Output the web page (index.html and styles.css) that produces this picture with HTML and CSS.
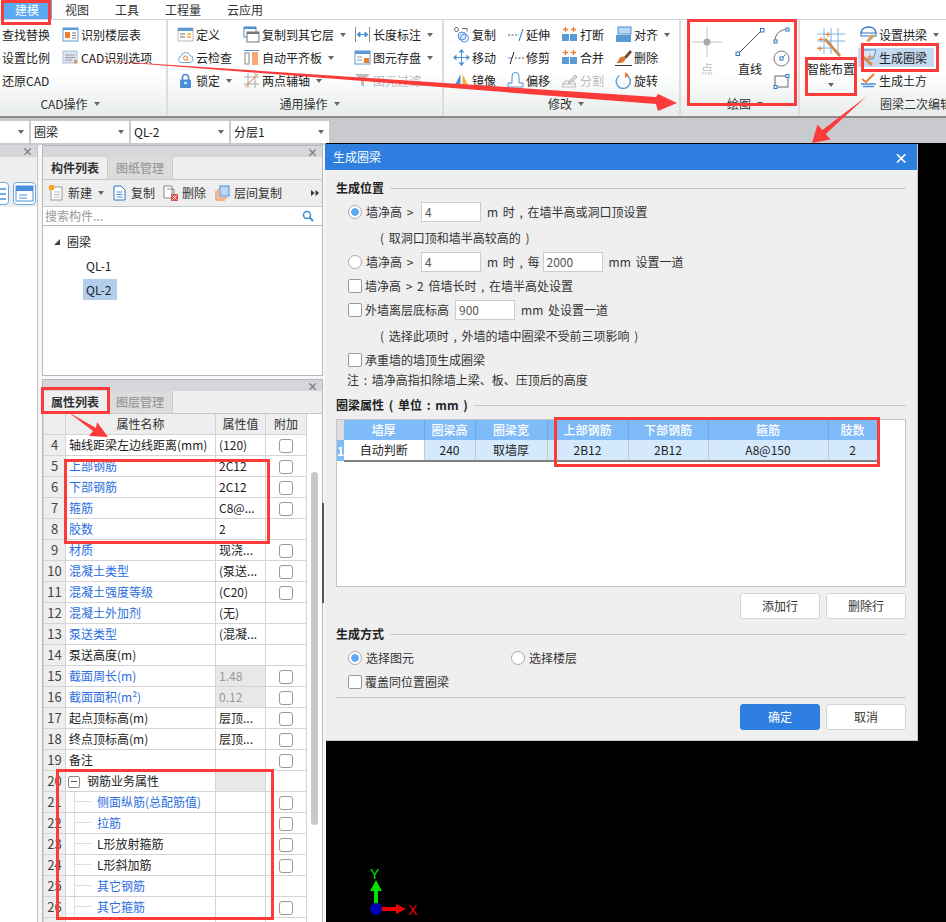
FILE: index.html
```html
<!DOCTYPE html>
<html lang="zh-CN">
  <head>
    <meta charset="UTF-8" />
    <title>生成圈梁</title>
    <link rel="stylesheet" href="styles.css">
  </head>
  <body>
    <div class="page">
      <div class="menu">
        <div class="menu-tab on">建模</div>
        <div class="menu-tab">视图</div>
        <div class="menu-tab">工具</div>
        <div class="menu-tab">工程量</div>
        <div class="menu-tab">云应用</div>
      </div>

      <div class="ribbon">
        <!-- CAD操作 -->
        <div class="group g-cad">
          <div class="group-body">
            <div class="col c1">
              <div class="item">查找替换</div>
              <div class="item">设置比例</div>
              <div class="item">还原CAD</div>
            </div>
            <div class="col">
              <div class="item"><svg class="ic" viewBox="0 0 17 17"><rect x="1" y="2" width="15" height="13" fill="#fff" stroke="#5b9bd5"/><rect x="1" y="2" width="15" height="2" fill="#5b9bd5"/><rect x="3" y="6" width="5" height="6" fill="#ed7d31"/><path d="M10 7h4M10 9.500h4M10 12h4" stroke="#777"/></svg>识别楼层表</div>
              <div class="item"><svg class="ic" viewBox="0 0 17 17"><rect x="1" y="2" width="14" height="12" fill="#dce6f2" stroke="#a9c0da"/><path d="M3 6h10M3 8.500h10M3 11h7" stroke="#9a9a9a"/><path d="M12 10l4 3-2 .5-1 2.500z" fill="#ed7d31"/></svg>CAD识别选项</div>
            </div>
          </div>
          <div class="group-label">CAD操作<i class="caret"></i></div>
        </div>

        <!-- 通用操作 -->
        <div class="group g-common">
          <div class="group-body">
            <div class="col c1">
              <div class="item"><svg class="ic" viewBox="0 0 17 17"><rect x="1" y="2" width="15" height="13" fill="#fff" stroke="#bbb"/><rect x="1" y="2" width="15" height="3" fill="#5b9bd5"/><path d="M3 8h5M3 11h5" stroke="#999" stroke-width="1.500"/><path d="M10 8h4M10 11h4" stroke="#f5a623" stroke-width="1.500"/></svg>定义</div>
              <div class="item"><svg class="ic" viewBox="0 0 17 17"><path d="M4.500 13.500a3.200 3.200 0 0 1-.5-6.300 4.800 4.800 0 0 1 9.200-.6 3.500 3.500 0 0 1 0 6.900z" fill="#fff" stroke="#6aa7e0"/><circle cx="8.500" cy="9" r="2" fill="none" stroke="#ed7d31"/><path d="M10 10.500l1.500 1.500" stroke="#ed7d31"/></svg>云检查</div>
              <div class="item"><svg class="ic" viewBox="0 0 17 17"><path d="M5.500 8V5.500a3 3 0 0 1 6 0V8" fill="none" stroke="#4a90d9" stroke-width="1.600"/><rect x="3" y="7.500" width="11" height="8.500" rx="1" fill="#4a90d9"/><circle cx="8.500" cy="11" r="1.300" fill="#fff"/></svg>锁定<i class="caret"></i></div>
            </div>
            <div class="col c2">
              <div class="item"><svg class="ic" viewBox="0 0 17 17"><rect x="1" y="1" width="12" height="10" fill="#fff" stroke="#4a90d9"/><rect x="1" y="1" width="12" height="2" fill="#4a90d9"/><rect x="4" y="6" width="12" height="10" fill="#fff" stroke="#777"/><rect x="4" y="6" width="12" height="2" fill="#777"/></svg>复制到其它层<i class="caret"></i></div>
              <div class="item"><svg class="ic" viewBox="0 0 17 17"><path d="M1 1.500h15" stroke="#5b9bd5"/><rect x="2" y="4" width="4" height="11" fill="#fff" stroke="#888"/><rect x="9" y="3" width="6" height="13" fill="#f9a876"/></svg>自动平齐板<i class="caret"></i></div>
              <div class="item"><svg class="ic" viewBox="0 0 17 17"><path d="M5 1v15M12 1v15M1 5h15M1 12h15" stroke="#aaa"/><path d="M2 15L15 2" stroke="#ed7d31"/></svg>两点辅轴<i class="caret"></i></div>
            </div>
            <div class="col">
              <div class="item"><svg class="ic" viewBox="0 0 17 17"><path d="M1.500 1v15M15.500 1v15" stroke="#888"/><path d="M3 8.500h11M3 8.500l3-2.500v5zM14 8.500l-3-2.500v5z" fill="#4a90d9" stroke="#4a90d9"/></svg>长度标注<i class="caret"></i></div>
              <div class="item"><svg class="ic" viewBox="0 0 17 17"><rect x="1" y="2" width="15" height="13" fill="#fff" stroke="#5b9bd5"/><rect x="1" y="2" width="15" height="3" fill="#5b9bd5"/><path d="M3 8h5M3 11h5" stroke="#999"/><rect x="10" y="9" width="5" height="5" fill="#ed7d31"/></svg>图元存盘<i class="caret"></i></div>
              <div class="item off"><svg class="ic" viewBox="0 0 17 17"><path d="M1 2h15l-6 6v7l-3-2V8z" fill="#bdbdbd"/></svg>图元过滤</div>
            </div>
          </div>
          <div class="group-label">通用操作<i class="caret"></i></div>
        </div>

        <!-- 修改 -->
        <div class="group g-edit">
          <div class="group-body">
            <div class="col">
              <div class="item"><svg class="ic" viewBox="0 0 17 17"><circle cx="3.500" cy="3.500" r="2" fill="none" stroke="#666"/><circle cx="9" cy="10" r="4" fill="#dbe9f7" stroke="#4a90d9"/><circle cx="11.500" cy="12" r="4" fill="none" stroke="#4a90d9"/><path d="M9 2.500h5v3" fill="none" stroke="#666"/></svg>复制</div>
              <div class="item"><svg class="ic" viewBox="0 0 17 17"><path d="M8.500 3v11M3 8.500h11" stroke="#4a90d9"/><path d="M8.500 0l3 3.500h-6zM8.500 17l3-3.500h-6zM0 8.500l3.500-3v6zM17 8.500l-3.500-3v6z" fill="#4a90d9"/></svg>移动</div>
              <div class="item"><svg class="ic" viewBox="0 0 17 17"><path d="M1 15L7.500 2v13z" fill="#4a90d9"/><path d="M9.500 2L16 15H9.500z" fill="#f5b335"/></svg>镜像</div>
            </div>
            <div class="col">
              <div class="item"><svg class="ic" viewBox="0 0 17 17"><path d="M1 9h11" stroke="#555" stroke-dasharray="2 1.500"/><path d="M12 15l4-12" stroke="#4a90d9" stroke-width="1.200"/></svg>延伸</div>
              <div class="item"><svg class="ic" viewBox="0 0 17 17"><path d="M1 9h4" stroke="#4a90d9"/><path d="M3 15L7 3" stroke="#222"/><path d="M8 9h9" stroke="#555" stroke-dasharray="2 1.500"/></svg>修剪</div>
              <div class="item"><svg class="ic" viewBox="0 0 17 17"><path d="M1 15v-4h4V4a3.500 3.500 0 0 1 7 0v7h4v4z" fill="#fff" stroke="#4a90d9"/><path d="M1 16.500h15" stroke="#f5b335" stroke-width="1.500"/></svg>偏移</div>
            </div>
            <div class="col">
              <div class="item"><svg class="ic" viewBox="0 0 17 17"><rect x="1" y="8" width="7" height="7" fill="#5b9bd5"/><rect x="9" y="8" width="7" height="7" fill="#5b9bd5"/><path d="M4.500 1v5M2 3.500h5M12.500 1v5M10 3.500h5" stroke="#ed7d31" stroke-width="1.400"/></svg>打断</div>
              <div class="item"><svg class="ic" viewBox="0 0 17 17"><rect x="1" y="8" width="15" height="7" fill="#5b9bd5"/><path d="M8.500 8v7" stroke="#fff"/><path d="M4.500 1v5M2 3.500h5M12.500 1v5M10 3.500h5" stroke="#ed7d31" stroke-width="1.400"/></svg>合并</div>
              <div class="item off"><svg class="ic" viewBox="0 0 17 17"><path d="M1 15h14l-2-6H4zM1 12h14" fill="none" stroke="#bbb"/><path d="M7 11l7-8 2 2-7 6z" fill="#e3e3e3" stroke="#aaa"/></svg>分割</div>
            </div>
            <div class="col">
              <div class="item"><svg class="ic" viewBox="0 0 17 17"><rect x="3" y="1" width="13" height="7" fill="#bcd7f2" stroke="#4a90d9"/><rect x="1" y="9" width="15" height="7" fill="#5b9bd5"/></svg>对齐<i class="caret"></i></div>
              <div class="item"><svg class="ic" viewBox="0 0 17 17"><path d="M9 8l6-7 2 2-6 7z" fill="#6b4a2f"/><path d="M4 10c2-3 5-3 6-1 1 2-1 5-5 5H1c2-1 2-2 3-4z" fill="#d9793a"/><path d="M0 16.500h17" stroke="#333"/></svg>删除</div>
              <div class="item"><svg class="ic" viewBox="0 0 17 17"><path d="M4.500 3.500a7 7 0 1 0 6 -.7" fill="none" stroke="#5b9bd5" stroke-width="1.400"/><path d="M10 0l4 3-4 3z" fill="#ed7d31"/></svg>旋转</div>
            </div>
          </div>
          <div class="group-label">修改<i class="caret"></i></div>
        </div>

        <!-- 绘图 -->
        <div class="group g-draw">
          <div class="group-body">
            <div class="big big-point">
              <svg class="ic-big" viewBox="0 0 30 30"><path d="M15 0v30M0 15h30" stroke="#c4c4c4"/><circle cx="15" cy="15" r="3.500" fill="#aaa"/></svg>
              <span class="off">点</span>
            </div>
            <div class="big big-line">
              <svg class="ic-big" viewBox="0 0 30 30"><path d="M3 27L27 3" stroke="#555"/><rect x="1" y="25" width="3.500" height="3.500" fill="#fff" stroke="#2f75c0"/><rect x="25.500" y="1.500" width="3.500" height="3.500" fill="#fff" stroke="#2f75c0"/></svg>
              <span>直线</span>
            </div>
            <div class="col col-shapes">
              <svg class="ic" viewBox="0 0 17 17"><path d="M2 14C2 7 7 3 14 2" fill="none" stroke="#666"/><rect x="1" y="13" width="3" height="3" fill="#fff" stroke="#2f75c0"/><rect x="13" y="1" width="3" height="3" fill="#fff" stroke="#2f75c0"/></svg>
              <svg class="ic" viewBox="0 0 17 17"><circle cx="8.500" cy="8.500" r="7.500" fill="none" stroke="#777"/><rect x="7" y="7" width="3" height="3" fill="#fff" stroke="#2f75c0"/><path d="M10 7l3-3" stroke="#777"/></svg>
              <svg class="ic" viewBox="0 0 17 17"><rect x="2" y="3" width="13" height="11" fill="none" stroke="#666"/><rect x="1" y="12.500" width="3" height="3" fill="#fff" stroke="#2f75c0"/><rect x="13" y="1.500" width="3" height="3" fill="#fff" stroke="#2f75c0"/></svg>
            </div>
          </div>
          <div class="group-label">绘图<i class="caret"></i></div>
        </div>

        <!-- 圈梁二次编辑 -->
        <div class="group g-beam">
          <div class="group-body">
            <div class="big big-smart">
              <svg class="ic-big" viewBox="0 0 30 30"><path d="M8 1v26M15 1v26M22 1v26M1 7h28M1 14h28M1 21h14" stroke="#7fb2e5"/><path d="M8 13l2-2 15 17-2 2z" fill="#c98a4b"/><path d="M5 10v5M2.500 12.500h5M12 5v5M9.500 7.500h5M4 19v5M1.500 21.500h5" stroke="#ed7d31"/></svg>
              <span>智能布置</span>
              <i class="caret"></i>
            </div>
            <div class="col">
              <div class="item"><svg class="ic" viewBox="0 0 17 17"><path d="M1 7c0-8 15-8 15 0" fill="none" stroke="#2f75c0" stroke-width="1.500"/><rect x="1" y="7" width="15" height="3" fill="#fff" stroke="#2f75c0"/><path d="M6 15l6-7 3 2-6 6z" fill="#d9a066"/></svg>设置拱梁<i class="caret"></i></div>
              <div class="item item-sel"><svg class="ic" viewBox="0 0 17 17"><path d="M4 1h12l-3 9H1z" fill="#dce6f2" stroke="#4a90d9"/><path d="M3 6l10 9-2 2L1 8z" fill="#d98a3a"/><path d="M10 5v6M7 8h6" stroke="#ed7d31"/></svg>生成圈梁</div>
              <div class="item"><svg class="ic" viewBox="0 0 17 17"><path d="M2 7l4 3 8-8" fill="none" stroke="#ed7d31" stroke-width="2"/><path d="M1 12h15M3 14.500h11" stroke="#4a90d9" stroke-width="1.300"/></svg>生成土方</div>
            </div>
          </div>
          <div class="group-label">圈梁二次编辑</div>
        </div>
      </div>

      <div class="selects">
        <div class="sel sel-first"><i class="caret"></i></div>
        <div class="sel">圈梁<i class="caret"></i></div>
        <div class="sel">QL-2<i class="caret"></i></div>
        <div class="sel">分层1<i class="caret"></i></div>
      </div>

      <div class="main">
        <div class="side">
          <div class="panel-nav">
            <div class="panel-head"><span>×</span></div>
            <div class="nav-tools">
              <div class="nav-btn"><svg viewBox="0 0 23 23" width="23" height="23"><path d="M3 7h17M3 12h17M3 17h17" stroke="#4a90d9" stroke-width="1.500"/></svg></div>
              <div class="nav-btn"><svg viewBox="0 0 23 23" width="23" height="23"><rect x="3" y="4" width="17" height="15" fill="#fff" stroke="#4a90d9"/><rect x="3" y="4" width="17" height="5" fill="#4a90d9"/><path d="M6 13h8M6 16h8" stroke="#4a90d9"/></svg></div>
            </div>
          </div>

          <div class="stack">
            <div class="panel panel-list">
              <div class="panel-head"><span>×</span></div>
              <div class="panel-tabs">
                <div class="ptab on">构件列表</div>
                <div class="ptab">图纸管理</div>
              </div>
              <div class="panel-tools">
                <div class="tool tool-new"><svg class="ic-sm" viewBox="0 0 15 16"><rect x="2" y="2" width="11" height="13" fill="#fff" stroke="#999"/><path d="M5 7h6M5 9.500h6M5 12h6" stroke="#bbb"/><rect x="0" y="0" width="5" height="5" fill="#f5a623"/></svg>新建<i class="caret"></i></div>
                <div class="tool tool-copy"><svg class="ic-sm" viewBox="0 0 15 16"><path d="M2 1h7l4 4v10H2z" fill="#fff" stroke="#2f75c0"/><path d="M4.500 7h6M4.500 9.500h6M4.500 12h6" stroke="#4a90d9"/></svg>复制</div>
                <div class="tool tool-del"><svg class="ic-sm" viewBox="0 0 15 16"><path d="M1 1h8v12H1z" fill="#fff" stroke="#888"/><path d="M4 4h7v8" fill="none" stroke="#888"/><rect x="8" y="9" width="7" height="7" fill="#d9534f"/><path d="M9.500 10.500l4 4M13.500 10.500l-4 4" stroke="#fff"/></svg>删除</div>
                <div class="tool tool-floor"><svg class="ic-sm" viewBox="0 0 15 16"><path d="M1 6v9h9M3 4v9h9" fill="none" stroke="#ed7d31"/><rect x="5" y="1" width="9" height="10" fill="#bcd7f2" stroke="#4a90d9"/></svg>层间复制</div>
                <svg class="tool-more" viewBox="0 0 8 6" width="8" height="6"><path d="M0 0l3.500 3L0 6zM4.500 0L8 3 4.500 6z" fill="#333"/></svg>
              </div>
              <div class="search"><span>搜索构件...</span><svg viewBox="0 0 12 12" width="12" height="12"><circle cx="5" cy="5" r="3.500" fill="none" stroke="#3a8fd0" stroke-width="1.500"/><path d="M7.500 7.500L11 11" stroke="#3a8fd0" stroke-width="2"/></svg></div>
              <div class="tree">
                <div class="tree-root"><i class="tri"></i>圈梁</div>
                <div class="tree-leaf"><span>QL-1</span></div>
                <div class="tree-leaf"><span class="on">QL-2</span></div>
              </div>
            </div>

            <div class="panel panel-prop">
              <div class="panel-head"><span>×</span></div>
              <div class="panel-tabs">
                <div class="ptab on">属性列表</div>
                <div class="ptab">图层管理</div>
              </div>
              <div class="prop-wrap">
                <table class="prop">
                  <colgroup><col class="pc-n"><col class="pc-name"><col class="pc-val"><col class="pc-add"></colgroup>
                  <thead><tr><th></th><th>属性名称</th><th>属性值</th><th>附加</th></tr></thead>
                  <tbody>
                    <tr><td class="n">4</td><td>轴线距梁左边线距离(mm)</td><td>(120)</td><td class="c"><i class="chk"></i></td></tr>
                    <tr><td class="n">5</td><td class="lnk">上部钢筋</td><td>2C12</td><td class="c"><i class="chk"></i></td></tr>
                    <tr><td class="n">6</td><td class="lnk">下部钢筋</td><td>2C12</td><td class="c"><i class="chk"></i></td></tr>
                    <tr><td class="n">7</td><td class="lnk">箍筋</td><td>C8@...</td><td class="c"><i class="chk"></i></td></tr>
                    <tr><td class="n">8</td><td class="lnk">胶数</td><td>2</td><td class="c"></td></tr>
                    <tr><td class="n">9</td><td class="lnk">材质</td><td>现浇...</td><td class="c"><i class="chk"></i></td></tr>
                    <tr><td class="n">10</td><td class="lnk">混凝土类型</td><td>(泵送...</td><td class="c"><i class="chk"></i></td></tr>
                    <tr><td class="n">11</td><td class="lnk">混凝土强度等级</td><td>(C20)</td><td class="c"><i class="chk"></i></td></tr>
                    <tr><td class="n">12</td><td class="lnk">混凝土外加剂</td><td>(无)</td><td class="c"></td></tr>
                    <tr><td class="n">13</td><td class="lnk">泵送类型</td><td>(混凝...</td><td class="c"></td></tr>
                    <tr><td class="n">14</td><td>泵送高度(m)</td><td></td><td class="c"></td></tr>
                    <tr><td class="n">15</td><td class="lnk">截面周长(m)</td><td class="ro">1.48</td><td class="c"><i class="chk"></i></td></tr>
                    <tr><td class="n">16</td><td class="lnk">截面面积(m²)</td><td class="ro">0.12</td><td class="c"><i class="chk"></i></td></tr>
                    <tr><td class="n">17</td><td>起点顶标高(m)</td><td>层顶...</td><td class="c"><i class="chk"></i></td></tr>
                    <tr><td class="n">18</td><td>终点顶标高(m)</td><td>层顶...</td><td class="c"><i class="chk"></i></td></tr>
                    <tr><td class="n">19</td><td>备注</td><td></td><td class="c"><i class="chk"></i></td></tr>
                    <tr><td class="n">20</td><td class="grp"><i class="minus"></i>钢筋业务属性</td><td class="ro"></td><td class="c"></td></tr>
                    <tr><td class="n">21</td><td class="sub lnk">侧面纵筋(总配筋值)</td><td></td><td class="c"><i class="chk"></i></td></tr>
                    <tr><td class="n">22</td><td class="sub lnk">拉筋</td><td></td><td class="c"><i class="chk"></i></td></tr>
                    <tr><td class="n">23</td><td class="sub">L形放射箍筋</td><td></td><td class="c"><i class="chk"></i></td></tr>
                    <tr><td class="n">24</td><td class="sub">L形斜加筋</td><td></td><td class="c"><i class="chk"></i></td></tr>
                    <tr><td class="n">25</td><td class="sub lnk">其它钢筋</td><td></td><td class="c"></td></tr>
                    <tr><td class="n">26</td><td class="sub lnk">其它箍筋</td><td></td><td class="c"><i class="chk"></i></td></tr>
                    <tr><td class="n"></td><td></td><td></td><td class="c"><i class="chk"></i></td></tr>
                  </tbody>
                </table>
                <div class="scroll"><div class="thumb"></div></div>
              </div>
            </div>
          </div>
          <div class="splitter"></div>
        </div>

        <div class="canvas">
          <svg class="axes" viewBox="0 0 50 52" width="50" height="52">
            <text x="0" y="12" class="ax-y">Y</text>
            <path d="M0 24l6-11 6 11H8v18H4V24z" fill="#00e000"/>
            <path d="M11 40h15v-3l10 5-10 5v-3H11z" fill="#f00000"/>
            <circle cx="6" cy="42" r="6" fill="#0000b4"/>
            <text x="38" y="48" class="ax-x">X</text>
          </svg>
        </div>

        <div class="dialog">
          <div class="dlg-title"><span>生成圈梁</span><span class="dlg-close">×</span></div>
          <div class="dlg-body">
            <div class="pos-grid">
              <div class="heading">生成位置</div>
              <div class="row"><i class="radio on"></i><span class="gt">墙净高 &gt;</span><span class="inp">4</span><span>m 时 , 在墙半高或洞口顶设置</span></div>
              <div class="row hint">( 取洞口顶和墙半高较高的 )</div>
              <div class="row"><i class="radio"></i><span class="gt">墙净高 &gt;</span><span class="inp">4</span><span>m 时 , 每</span><span class="inp inp-every">2000</span><span>mm 设置一道</span></div>
              <div class="row tight"><i class="box"></i><span>墙净高 &gt; 2 倍墙长时 , 在墙半高处设置</span></div>
              <div class="row tight"><i class="box"></i><span>外墙离层底标高</span><span class="inp">900</span><span>mm 处设置一道</span></div>
              <div class="row hint">( 选择此项时 , 外墙的墙中圈梁不受前三项影响 )</div>
              <div class="row tight"><i class="box"></i><span>承重墙的墙顶生成圈梁</span></div>
              <div class="row note">注 : 墙净高指扣除墙上梁、板、压顶后的高度</div>
              <div class="heading">圈梁属性 ( 单位 : mm )</div>
            </div>

            <div class="grid-box">
              <table class="beam">
                <colgroup><col class="bc-0"><col class="bc-1"><col class="bc-2"><col class="bc-3"><col class="bc-4"><col class="bc-5"><col class="bc-6"><col class="bc-7"></colgroup>
                <thead><tr><th class="corner"></th><th>墙厚</th><th>圈梁高</th><th>圈梁宽</th><th>上部钢筋</th><th>下部钢筋</th><th>箍筋</th><th>肢数</th></tr></thead>
                <tbody><tr><td class="rh">1</td><td class="first">自动判断</td><td>240</td><td>取墙厚</td><td>2B12</td><td>2B12</td><td>A8@150</td><td>2</td></tr></tbody>
              </table>
            </div>

            <div class="btn-row">
              <button class="btn">添加行</button>
              <button class="btn">删除行</button>
            </div>

            <div class="heading head-way">生成方式</div>
            <div class="row"><i class="radio on"></i><span class="way">选择图元</span><i class="radio"></i><span>选择楼层</span></div>
            <div class="row tight"><i class="box"></i><span>覆盖同位置圈梁</span></div>
            <div class="sep"></div>
            <div class="btn-row">
              <button class="btn primary">确定</button>
              <button class="btn">取消</button>
            </div>
          </div>
        </div>
      </div>

      <!-- 标注 -->
      <svg class="marks" viewBox="0 0 946 922" width="946" height="922">
        <g class="mark-box">
          <rect x="2.500" y="1.500" width="47" height="22"/>
          <rect x="688.500" y="20.500" width="107" height="84"/>
          <rect x="806.500" y="58.500" width="49" height="36"/>
          <rect x="862.500" y="44.500" width="75" height="26"/>
          <rect x="42.500" y="388.500" width="66" height="24"/>
          <rect x="65.500" y="460.500" width="203" height="82"/>
          <rect x="57.500" y="770.500" width="215" height="148"/>
          <rect x="555.500" y="418.500" width="323" height="47"/>
        </g>
        <g class="mark-arrow">
          <polygon points="80,59 656,97 658,94 677,103 658,111 656,104"/>
          <polygon points="867,96 822.400,130 817.500,124.500 812,143 830.500,139.500 825.600,134"/>
          <polygon points="68,412 96,428 97,422 108,437 89,436 93,431"/>
        </g>
      </svg>
    </div>
  </body>
</html>
```

FILE: styles.css
```css
* {
  margin: 0;
  padding: 0;
  box-sizing: border-box;
}
body {
  font: 12px/16px "Noto Sans CJK SC", "Liberation Sans", sans-serif;
  color: #222;
  background: #000;
}
i {
  font-style: normal;
}
.page {
  position: relative;
  width: 946px;
  height: 922px;
  overflow: hidden;
  display: flex;
  flex-direction: column;
}

/* menu + ribbon */
.menu {
  display: flex;
  height: 20px;
  padding-left: 2px;
  background: #fff;
  border-bottom: 1px solid #d4d4d4;
}
.menu-tab {
  padding: 0 13px;
  line-height: 20px;
  color: #333;
}
.menu-tab.on {
  background: #5aa9f5;
  color: #fff;
}
.ribbon {
  display: flex;
  height: 98px;
  overflow: hidden;
  background: linear-gradient(#fff 55%, #e9ecec);
  border-bottom: 2px solid #8c8c8c;
}
.group {
  display: flex;
  flex: none;
  flex-direction: column;
  border-right: 2px solid #dcdede;
}
.g-cad { width: 168px; padding-left: 2px; }
.g-common { width: 276px; padding-left: 9px; }
.g-edit { width: 237px; padding-left: 9px; }
.g-draw { width: 119px; padding-left: 11px; }
.g-beam { width: 146px; border: 0; padding-left: 6px; }
.group-body {
  display: flex;
  height: 72px;
  padding-top: 3px;
}
.group-label {
  display: flex;
  align-items: center;
  justify-content: center;
  height: 24px;
  color: #333;
}
.g-cad .group-label { padding-right: 28px; }
.g-beam .group-label { justify-content: flex-start; padding-left: 74px; white-space: nowrap; }
.col {
  display: flex;
  flex: none;
  flex-direction: column;
  width: 54px;
}
.g-cad .c1 { width: 60px; }
.g-cad .col:last-child { width: 100px; }
.g-common .c1 { width: 66px; }
.g-common .c2 { width: 111px; }
.g-common .col:last-child { width: 88px; }
.item {
  display: flex;
  align-items: center;
  height: 23px;
  white-space: nowrap;
}
.off { color: #bbb; }
.ic {
  width: 17px;
  height: 17px;
  flex: none;
  margin-right: 2px;
}
.caret {
  display: inline-block;
  width: 0;
  height: 0;
  margin-left: 6px;
  border: 3px solid transparent;
  border-top: 4px solid #666;
  border-bottom: 0;
}
.big {
  display: flex;
  flex: none;
  flex-direction: column;
  align-items: center;
  padding-top: 4px;
}
.ic-big {
  width: 30px;
  height: 30px;
  margin-bottom: 4px;
}
.big-point { width: 30px; margin-right: 13px; }
.big-line { width: 30px; margin-right: 8px; }
.col-shapes {
  width: 17px;
  height: 69px;
  padding-top: 4px;
  gap: 6px;
}
.big-smart { width: 50px; margin-right: 4px; }
.big-smart .caret { margin: 6px 0 0; }
.g-beam .col { width: 86px; }
.item-sel {
  width: 76px;
  height: 19px;
  margin: 2px 0 2px -2px;
  padding-left: 2px;
  background: #c5d9f1;
}
.selects {
  display: flex;
  flex: none;
  height: 25px;
  padding-top: 3px;
  gap: 2px;
  background: #c8cace;
}
.sel {
  display: flex;
  align-items: center;
  justify-content: space-between;
  width: 98px;
  padding: 0 5px 0 3px;
  background: #fff;
}
.sel-first {
  width: 29px;
  justify-content: flex-end;
}

/* left side */
.main {
  position: relative;
  display: flex;
  flex: 1;
  min-height: 0;
}
.side {
  position: relative;
  display: flex;
  flex: none;
  width: 326px;
  padding-top: 2px;
  background: linear-gradient(#c8cace 2px, #f7f7f7 2px);
}
.panel-nav {
  width: 38px;
  background: #fff;
  border-right: 1px solid #c4c6ca;
}
.panel-head {
  display: flex;
  justify-content: flex-end;
  align-items: center;
  height: 12px;
  padding-right: 4px;
  background: #d5d7da;
  color: #777;
  font-size: 11px;
  font-weight: 700;
  line-height: 12px;
}
.nav-tools {
  display: flex;
  justify-content: flex-end;
  gap: 4px;
  height: 50px;
  padding: 25px 1px 0 0;
  background: #eee;
}
.nav-btn {
  width: 23px;
  height: 23px;
  flex: none;
  border: 1px solid #6aa7e0;
  border-radius: 4px;
  background: #fff;
  overflow: hidden;
}
.nav-btn svg {
  display: block;
  margin: -1px;
}
.stack {
  display: flex;
  flex-direction: column;
  gap: 3px;
  width: 281px;
  margin-left: 4px;
}
.panel {
  display: flex;
  flex-direction: column;
  background: #eee;
  border: 1px solid #b5b8bc;
  overflow: hidden;
}
.panel-list { height: 231px; flex: none; }
.panel-prop { flex: 1; min-height: 0; border-bottom: 0; }
.panel-list .panel-head,
.panel-prop .panel-head { height: 11px; }
.panel-tabs {
  display: flex;
  height: 23px;
  flex: none;
  border-bottom: 1px solid #c8c8c8;
}
.ptab {
  width: 65px;
  text-align: center;
  line-height: 22px;
  background: #dcdcdc;
  color: #999;
  border-right: 1px solid #c8c8c8;
  font-weight: 500;
}
.ptab.on {
  background: #eee;
  color: #333;
  font-weight: 700;
}
.panel-tools {
  display: flex;
  align-items: center;
  height: 27px;
  flex: none;
  padding-left: 6px;
  border-bottom: 1px solid #c8c8c8;
}
.tool {
  display: flex;
  align-items: center;
  white-space: nowrap;
  color: #333;
}
.ic-sm {
  width: 15px;
  height: 16px;
  margin-right: 4px;
}
.tool-new { width: 63px; }
.tool-copy { width: 51px; }
.tool-del { width: 52px; }
.tool-more {
  margin-left: auto;
  margin-right: 3px;
}
.search {
  display: flex;
  align-items: center;
  justify-content: space-between;
  height: 18px;
  flex: none;
  padding: 0 8px 0 2px;
  background: #fff;
  color: #999;
}
.tree {
  flex: 1;
  padding-top: 4px;
  background: #fff;
  border-top: 1px solid #b5b8bc;
}
.tree-root {
  display: flex;
  align-items: center;
  height: 24px;
  padding-left: 11px;
  color: #222;
}
.tri {
  width: 0;
  height: 0;
  margin-right: 7px;
  border-style: solid;
  border-width: 0 0 6px 6px;
  border-color: transparent transparent #444 transparent;
}
.tree-leaf {
  height: 24px;
  padding-left: 40px;
  line-height: 24px;
}
.tree-leaf span {
  display: inline-block;
  height: 21px;
  padding: 0 5px 0 3px;
  line-height: 21px;
}
.tree-leaf span.on { background: #b3cdec; }

/* property table */
.prop-wrap {
  display: flex;
  flex: 1;
  background: #fff;
}
.prop {
  width: 263px;
  height: 0;
  flex: none;
  table-layout: fixed;
  border-collapse: collapse;
}
.pc-n { width: 22px; }
.pc-name { width: 150px; }
.pc-val { width: 50px; }
.pc-add { width: 41px; }
.prop th {
  height: 20px;
  background: #eee;
  border: 1px solid #d4d4d4;
  border-top: 0;
  font-weight: 400;
  color: #333;
}
.prop td {
  height: 21px;
  padding: 0 3px;
  border: 1px solid #d4d4d4;
  white-space: nowrap;
  overflow: hidden;
}
.prop td.n {
  padding: 0;
  background: #eee;
  text-align: center;
  font-size: 13px;
  color: #444;
}
.prop td.lnk { color: #2b6de0; }
.prop td.ro { background: #e8e8e8; color: #999; }
.prop td.c { padding: 2px 0 0; text-align: center; line-height: 0; }
/* tree lines of the sub rows */
.prop td.sub {
  padding-left: 31px;
  background:
    linear-gradient(#ddd, #ddd) 8px 0 / 1px 100% no-repeat,
    linear-gradient(#ddd, #ddd) 9px 50% / 16px 1px no-repeat;
}
.prop td.grp { padding-left: 2px; }
.chk {
  display: inline-block;
  width: 14px;
  height: 14px;
  background: #fff;
  border: 1px solid #999;
  border-radius: 3px;
}
.minus {
  display: inline-block;
  width: 12px;
  height: 12px;
  margin-right: 7px;
  vertical-align: -2px;
  background: linear-gradient(#555, #555) center / 6px 1px no-repeat;
  border: 1px solid #888;
  border-radius: 2px;
}
.scroll {
  width: 16px;
  padding: 58px 4px 0;
  background: #fff;
}
.thumb {
  height: 353px;
  border-radius: 4px;
  background: #c8c8c8;
}
.splitter {
  position: absolute;
  left: 322px;
  top: 360px;
  width: 2px;
  height: 100px;
  background: #555;
}

/* canvas */
.canvas {
  position: relative;
  flex: 1;
  background: #000;
}
.axes {
  position: absolute;
  left: 44px;
  top: 724px;
}
.ax-y { font: 14px "Liberation Sans", sans-serif; fill: #00e000; }
.ax-x { font: 14px "Liberation Sans", sans-serif; fill: #f00000; }

/* dialog */
.dialog {
  position: absolute;
  left: 325px;
  top: 1px;
  width: 593px;
  height: 597px;
  background: #efefef;
  border-bottom: 1px solid #c4c6ca;
  border-right: 1px solid #c4c6ca;
}
.dlg-title {
  display: flex;
  justify-content: space-between;
  align-items: center;
  height: 26px;
  padding: 0 9px 0 8px;
  background: #2e7fe0;
  color: #fff;
}
.dlg-close { font-size: 14px; font-weight: 700; }
.dlg-body { padding: 6px 11px 0 11px; word-spacing: 2px; }
.pos-grid {
  display: grid;
  grid-template-rows: 24px 26px 24px 24px 24px 26px 24px 20px 28px 18px;
}
.heading {
  display: flex;
  align-items: center;
  font-weight: 700;
  color: #222;
}
.heading::after {
  content: "";
  flex: 1;
  height: 1px;
  margin-left: 6px;
  background: #c8c8c8;
}
.head-way { height: 24px; margin-top: 3px; }
.row {
  display: flex;
  align-items: center;
  height: 24px;
  padding-left: 12px;
  white-space: nowrap;
  color: #333;
}
.hint { padding-left: 44px; }
.note { padding-left: 11px; }
.radio {
  width: 14px;
  height: 14px;
  flex: none;
  margin-right: 4px;
  background: #fff;
  border: 1px solid #aaa;
  border-radius: 50%;
}
.radio.on { background: radial-gradient(#5aa9f5 3.500px, #fff 4px); }
.box {
  width: 14px;
  height: 14px;
  flex: none;
  margin-right: 3px;
  background: #fff;
  border: 1px solid #999;
  border-radius: 2px;
}
.gt { width: 55px; }
.inp {
  width: 60px;
  height: 20px;
  margin: 0 6px;
  padding-left: 3px;
  background: #fff;
  border: 1px solid #ccc;
  line-height: 18px;
  color: #555;
}
.gt + .inp { margin-left: 0; }
.inp-every { margin-left: 3px; }
.grid-box {
  height: 168px;
  margin-top: 5px;
  background: #fff;
  border: 1px solid #c4c4c4;
}
.beam {
  width: 540px;
  table-layout: fixed;
  border-collapse: collapse;
  text-align: center;
}
.bc-0 { width: 7px; }
.bc-1 { width: 80px; }
.bc-2 { width: 51px; }
.bc-3 { width: 72px; }
.bc-4 { width: 81px; }
.bc-5 { width: 80px; }
.bc-6 { width: 120px; }
.bc-7 { width: 49px; }
.beam th {
  height: 20px;
  background: #7fbbf9;
  border-right: 1px solid #6aa5e8;
  color: #fff;
  font-weight: 500;
}
.beam th.corner { background: #ddd; border: 0; }
.beam td {
  height: 21px;
  padding: 0;
  background: #d5e9fd;
  border-right: 1px solid #c8c8c8;
  border-bottom: 2px solid #808080;
  color: #222;
}
.beam td.first { background: #fff; }
.beam td.rh {
  background: #7fbbf9;
  border: 0;
  color: #fff;
  font-weight: 700;
  text-align: left;
  overflow: hidden;
}
.btn-row {
  display: flex;
  justify-content: flex-end;
  gap: 6px;
  margin-top: 6px;
}
.btn {
  width: 80px;
  height: 26px;
  background: #fff;
  border: 1px solid #d4d4d4;
  border-radius: 3px;
  font: inherit;
  color: #333;
}
.btn.primary {
  background: #2e7fe0;
  border-color: #2e7fe0;
  color: #fff;
}
.way { width: 145px; }
.sep {
  height: 1px;
  margin-top: 3px;
  background: #c8c8c8;
}

/* red notes on top of the shot */
.marks {
  position: absolute;
  left: 0;
  top: 0;
  pointer-events: none;
}
.mark-box rect {
  fill: none;
  stroke: #fb3a3a;
  stroke-width: 3;
}
.mark-arrow polygon { fill: #fb3a3a; }
```
